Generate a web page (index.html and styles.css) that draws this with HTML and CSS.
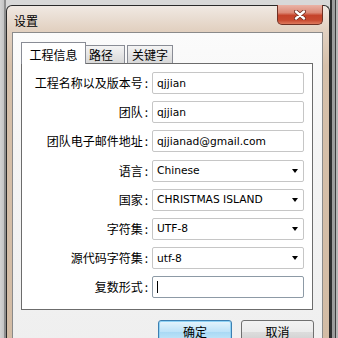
FILE: index.html
```html
<!DOCTYPE html>
<html lang="zh-CN">
<head>
<meta charset="utf-8">
<title>设置</title>
<link rel="stylesheet" href="styles.css">
</head>
<body>
<div class="screen">
  <div class="window">
    <div class="titlebar">
      <span class="title">设置</span>
      <div class="close">
        <svg width="12" height="10" viewBox="0 0 12 10">
          <path d="M2 1.5 L10 8.5 M10 1.5 L2 8.5" stroke="#6b2a1e" stroke-width="4" stroke-linecap="round"/>
          <path d="M2 1.5 L10 8.5 M10 1.5 L2 8.5" stroke="#ffffff" stroke-width="2.4" stroke-linecap="round"/>
        </svg>
      </div>
    </div>
    <div class="client">
      <div class="tabs">
        <div class="tab active">工程信息</div>
        <div class="tab tab-path">路径</div>
        <div class="tab">关键字</div>
      </div>
      <div class="panel">
        <div class="form">
          <label>工程名称以及版本号<span class="colon">:</span></label>
          <div class="field">qjjian</div>
          <label>团队<span class="colon">:</span></label>
          <div class="field">qjjian</div>
          <label>团队电子邮件地址<span class="colon">:</span></label>
          <div class="field">qjjianad@gmail.com</div>
          <label>语言<span class="colon">:</span></label>
          <div class="field select"><span>Chinese</span><i class="caret"></i></div>
          <label>国家<span class="colon">:</span></label>
          <div class="field select"><span>CHRISTMAS ISLAND</span><i class="caret"></i></div>
          <label>字符集<span class="colon">:</span></label>
          <div class="field select"><span>UTF-8</span><i class="caret"></i></div>
          <label>源代码字符集<span class="colon">:</span></label>
          <div class="field select"><span>utf-8</span><i class="caret"></i></div>
          <label>复数形式<span class="colon">:</span></label>
          <div class="field focused"><i class="cursor"></i></div>
        </div>
      </div>
      <div class="buttons">
        <button class="btn btn-default">确定</button>
        <button class="btn btn-cancel">取消</button>
      </div>
    </div>
  </div>
  <div class="edge"></div>
</div>
</body>
</html>
```
FILE: styles.css
```css
html, body {
  margin: 0;
  padding: 0;
}

body {
  width: 338px;
  height: 338px;
  overflow: hidden;
  font-family: "Noto Sans CJK SC", "Noto Sans", sans-serif;
  color: #000;
}

.screen {
  display: flex;
  align-items: flex-start;
  height: 338px;
  background: linear-gradient(to right, #d3d3d3 0, #c4c4c4 4px, #8e8e8e 4px, #8e8e8e 6px, #d8d8d8 6px);
}

.window {
  position: relative;
  box-sizing: border-box;
  width: 324px;
  height: 340px;
  margin: 5px 0 0 6px;
  border: 1px solid #2a2a2a;
  border-bottom: none;
  border-radius: 6px 6px 0 0;
  padding: 0 6px 0 5px;
  display: flex;
  flex-direction: column;
  background: linear-gradient(#f0e9e3 0, #e2d1c1 24px, #d6c0aa 60px, #d3bca5 100%);
}

.titlebar {
  height: 26px;
  box-sizing: border-box;
  padding: 3px 0 0 2px;
  display: flex;
  align-items: center;
}

.title {
  font-size: 12px;
  line-height: 14px;
}

.close {
  position: absolute;
  top: -1px;
  right: 6px;
  width: 46px;
  height: 20px;
  box-sizing: border-box;
  border: 1px solid #6e3024;
  border-top: none;
  border-radius: 0 0 5px 5px;
  background: linear-gradient(#eab3a6 0, #dc8a77 40%, #c5432a 55%, #c84a30 80%, #de7a5e 100%);
  display: flex;
  align-items: center;
  justify-content: center;
}

.client {
  flex: 1;
  border: 1px solid #8a8a8a;
  background: linear-gradient(#fbfbfb 0, #f4f4f4 120px, #efefef 100%);
  padding: 9px 9px 0 8px;
}

.tabs {
  display: flex;
  align-items: flex-end;
  height: 21px;
  position: relative;
  z-index: 1;
}

.tab {
  box-sizing: border-box;
  height: 18px;
  padding: 1px 4px 0;
  border: 1px solid #898c95;
  border-bottom: none;
  background: linear-gradient(#f4f4f4, #d8d8d8);
  font-size: 12px;
  line-height: 16px;
  display: flex;
  align-items: center;
  justify-content: center;
}

.tab + .tab {
  margin-left: 2px;
}

.tab.active {
  height: 22px;
  width: 65px;
  margin-bottom: -1px;
  background: #ffffff;
  padding-top: 2px;
}

.tab.active + .tab {
  margin-left: -1px;
}

.tab-path {
  width: 40px;
  padding: 1px 10px 0 2px;
}

.panel {
  box-sizing: border-box;
  height: 247px;
  border: 1px solid #6c6c6c;
  background: #ffffff;
  padding: 8px 8px 0 0;
}

.form {
  display: grid;
  grid-template-columns: 1fr 152px;
  grid-auto-rows: 22px;
  column-gap: 4px;
  row-gap: 7.2px;
  align-items: center;
}

.form label {
  text-align: right;
  font-size: 12px;
  line-height: 16px;
  white-space: nowrap;
}

.colon {
  margin-left: 2px;
}

.field {
  box-sizing: border-box;
  height: 22px;
  border: 1px solid #c6c6c6;
  border-radius: 2px;
  background: #ffffff;
  padding: 0 4px;
  display: flex;
  align-items: center;
  font-family: "DejaVu Sans", sans-serif;
  font-size: 10.7px;
  white-space: nowrap;
}

.select {
  justify-content: space-between;
}

.caret {
  width: 0;
  height: 0;
  border-left: 3px solid transparent;
  border-right: 3px solid transparent;
  border-top: 4px solid #000;
  margin-right: 1px;
}

.focused {
  border-color: #8d9aa6;
}

.cursor {
  width: 1px;
  height: 12px;
  background: #000;
}

.buttons {
  display: flex;
  justify-content: flex-end;
  gap: 9px;
  margin: 10px -1px 0 0;
}

.btn {
  box-sizing: border-box;
  height: 23px;
  border-radius: 3px;
  font-family: "Noto Sans CJK SC", sans-serif;
  font-size: 12px;
  color: #000;
  padding: 0;
}

.btn-default {
  width: 74px;
  border: 1px solid #3c7fb1;
  background: linear-gradient(#e6f4fc, #bfe3f8 50%, #a8d8f4 51%, #c6e8fa);
  box-shadow: inset 0 0 0 1px #8fd2f5;
}

.btn-cancel {
  width: 73px;
  border: 1px solid #707070;
  background: linear-gradient(#f2f2f2, #ebebeb 50%, #dddddd 51%, #cfcfcf);
}

.edge {
  width: 8px;
  height: 338px;
  background: linear-gradient(to right, #2e2e2e 0, #2e2e2e 2px, #9c9c9c 2px, #9c9c9c 5px, #3c3c3c 5px, #3c3c3c 6px, #b4b4b4 6px);
}
```
